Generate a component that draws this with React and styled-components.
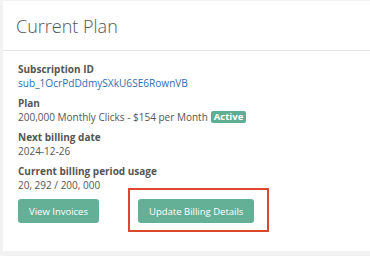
import React from "react";
import styled, { createGlobalStyle } from "styled-components";

const Global = createGlobalStyle`
  html, body { margin: 0; padding: 0; background: #f2f2f2; }
  body { font-family: "Open Sans", "Liberation Sans", sans-serif; }
`;

const Page = styled.div`
  width: 370px;
  height: 256px;
  padding: 1px 0 0 3px;
  box-sizing: border-box;
  background: #f2f2f2;
`;

const Card = styled.section`
  background: #ffffff;
  height: 250px;
  display: flex;
  flex-direction: column;
`;

const Header = styled.header`
  height: 49px;
  border-bottom: 1px solid #e6e6e6;
  padding: 0 0 0 13px;
  display: flex;
  align-items: flex-start;
`;

const Title = styled.h2`
  margin: 13px 0 0;
  font-size: 18px;
  line-height: 24px;
  font-weight: 300;
  color: #555555;
`;

const Body = styled.div`
  padding: 11px 15px 0;
  display: flex;
  flex-direction: column;
  gap: 6px;
`;

const Field = styled.div`
  display: flex;
  flex-direction: column;
`;

const Label = styled.div`
  font-size: 10px;
  line-height: 14px;
  font-weight: 700;
  color: #555555;
`;

const Value = styled.div`
  font-size: 10px;
  line-height: 14px;
  color: #555555;
  display: flex;
  align-items: center;
  gap: 3px;
`;

const Link = styled.a`
  font-size: 10.1px;
  line-height: 14px;
  color: #2f6db5;
  text-decoration: none;
`;

const Badge = styled.span`
  background: #5fae91;
  color: #ffffff;
  font-size: 9.5px;
  font-weight: 700;
  line-height: 12px;
  padding: 0 3px;
  border-radius: 2px;
`;

const Actions = styled.div`
  display: flex;
  align-items: center;
  gap: 39px;
  margin-top: 1px;
`;

const Button = styled.button`
  font-family: "Open Sans", "Liberation Sans", sans-serif;
  height: 24px;
  padding: 0 11px;
  background: #64b096;
  color: #ffffff;
  border: none;
  border-radius: 3px;
  font-size: 9.5px;
  font-weight: 400;
  cursor: pointer;
`;

const Highlight = styled.span`
  position: relative;
  display: inline-flex;
  &::after {
    content: "";
    position: absolute;
    top: -11px;
    left: -10px;
    right: -15px;
    bottom: -9px;
    border: 2px solid #e0462b;
    pointer-events: none;
  }
`;

export default function App() {
  return (
    <Page>
      <Global />
      <Card>
        <Header>
          <Title>Current Plan</Title>
        </Header>
        <Body>
          <Field>
            <Label>Subscription ID</Label>
            <Link href="#">sub_1OcrPdDdmySXkU6SE6RownVB</Link>
          </Field>
          <Field>
            <Label>Plan</Label>
            <Value>
              <span>200,000 Monthly Clicks - $154 per Month</span>
              <Badge>Active</Badge>
            </Value>
          </Field>
          <Field>
            <Label>Next billing date</Label>
            <Value>2024-12-26</Value>
          </Field>
          <Field>
            <Label>Current billing period usage</Label>
            <Value>20, 292 / 200, 000</Value>
          </Field>
          <Actions>
            <Button>View Invoices</Button>
            <Highlight>
              <Button>Update Billing Details</Button>
            </Highlight>
          </Actions>
        </Body>
      </Card>
    </Page>
  );
}
